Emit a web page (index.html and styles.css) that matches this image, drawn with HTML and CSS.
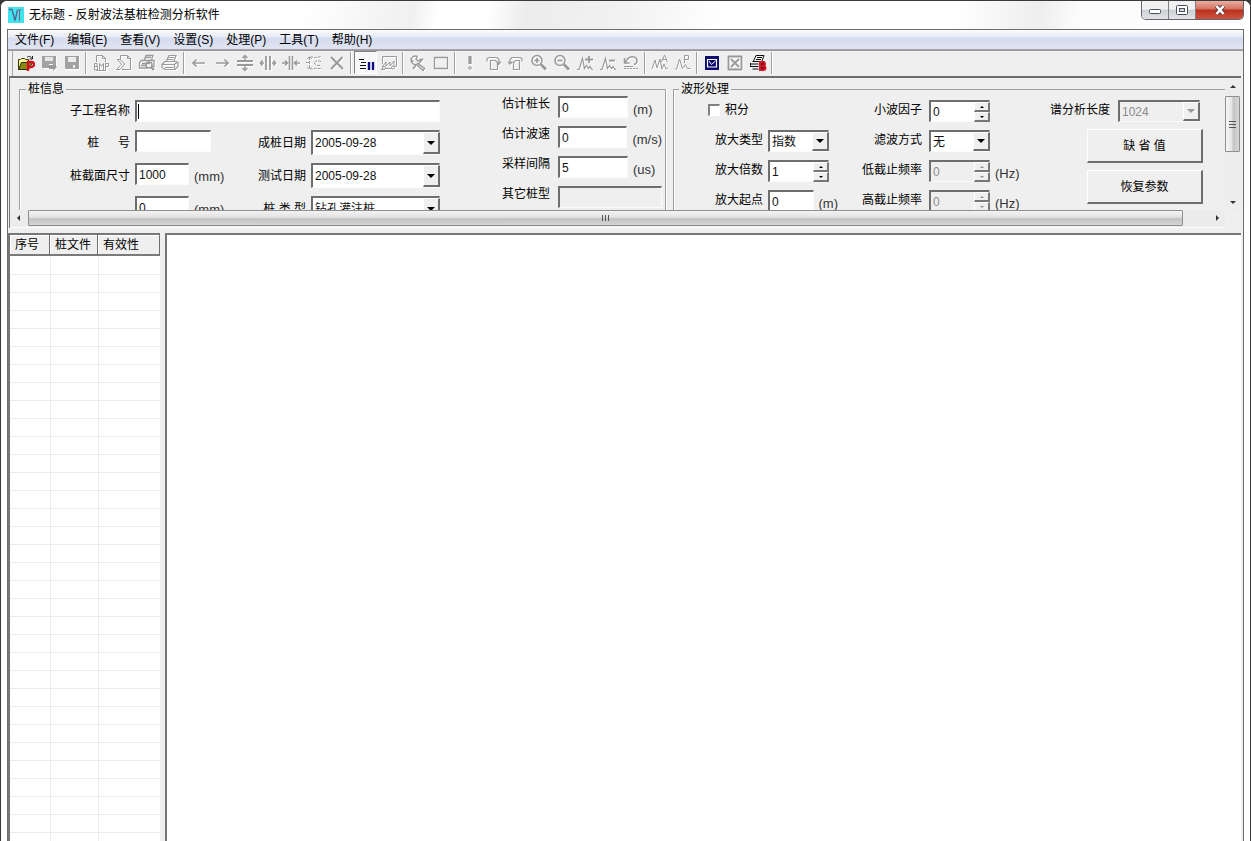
FILE: index.html
```html
<!DOCTYPE html>
<html lang="zh-CN">
<head>
<meta charset="utf-8">
<title>无标题 - 反射波法基桩检测分析软件</title>
<link rel="stylesheet" href="styles.css">
</head>
<body>
<div class="window">
  <header class="titlebar">
    <svg class="app-icon" viewBox="0 0 16 16"><rect width="16" height="16" fill="#3fe4ee"/><path d="M1 2.500h3l3 11 2.500-10.500" fill="none" stroke="#56618f" stroke-width="1.300"/><path d="M11.500 14V3.500M9.500 3h4" fill="none" stroke="#8a5a7a"/></svg>
    <h1 class="title">无标题 - 反射波法基桩检测分析软件</h1>
    <div class="caption">
      <button class="cap cap-min" aria-label="最小化"><svg width="14" height="10" viewBox="0 0 14 10"><rect x="1.5" y="4.5" width="11" height="4" rx="1" fill="#fff" stroke="#4a4e58"/></svg></button>
      <button class="cap cap-max" aria-label="最大化"><svg width="12" height="10" viewBox="0 0 12 10"><rect x=".5" y=".5" width="11" height="9" rx="1" fill="#fff" stroke="#4a4e58"/><rect x="3.5" y="3.5" width="5" height="3" fill="#d8dadd" stroke="#4a4e58"/></svg></button>
      <button class="cap cap-close" aria-label="关闭"><svg width="12" height="10" viewBox="0 0 12 10"><path d="M2.500 1l7 8M9.500 1l-7 8" stroke="#5a3a40" stroke-width="4.400"/><path d="M2.500 1l7 8M9.500 1l-7 8" stroke="#fff" stroke-width="2.600"/></svg></button>
    </div>
  </header>

  <div class="client">
    <nav class="menubar">
      <button>文件(F)</button><button>编辑(E)</button><button>查看(V)</button><button>设置(S)</button><button>处理(P)</button><button>工具(T)</button><button>帮助(H)</button>
    </nav>

    <div class="toolbar" role="toolbar">
      <button class="tool" aria-label="打开"><svg viewBox="0 0 18 18"><path d="M1.500 15.500v-10h2l1-1h3l1 1h3v3" fill="#f5f19a" stroke="#3c3c00"/><path d="M1.500 15.500l3-7h11l-4 7z" fill="#8a8a10" stroke="#2b2b00"/><path d="M10 3.500c2-2 4-1 5 1M15.500 2v3h-3" fill="none" stroke="#222"/><path d="M11 17V8h3.500a2.500 2.500 0 0 1 0 5H11" fill="none" stroke="#d01020" stroke-width="2.400"/></svg></button>
      <button class="tool" disabled aria-label="另存"><svg viewBox="0 0 18 18"><path d="M2 2h14v10h-3v-2H9v4H2z" fill="#a2a2a2"/><path d="M5 3h8v4H5z" fill="#e6e6e6"/><path d="M9 11h4V9l4 4-4 4v-2H9z" fill="#999"/></svg></button>
      <button class="tool" disabled aria-label="保存"><svg viewBox="0 0 18 18"><path d="M2 2h14v13H3l-1-1z" fill="#a2a2a2"/><path d="M5 3h8v5H5zM10 11h2v3h-2z" fill="#ececec"/></svg></button>
      <span class="sep"></span>
      <button class="tool" disabled aria-label="导出位图"><svg viewBox="0 0 18 18"><path d="M4.500 8V1.500h6l3 3V8M10.500 1.500v3h3M2.500 16V9.500h2.500v3H2.500h3V16zM7.500 16V9.500l2 3 2-3V16M13.500 16V9.500h3v3h-3M4 16.500h10"/></svg></button>
      <button class="tool" disabled aria-label="复制"><svg viewBox="0 0 18 18"><path d="M5.500 6V1.500h7l3 3v11h-5M12.500 1.500v3h3M2 5.500h3l5 4.500-5 5.500H1.500l4-4M3 6l4 5M7 15.500h4"/></svg></button>
      <button class="tool" disabled aria-label="打印预览"><svg viewBox="0 0 18 18"><path d="M6.500 6L8 1.500h7L13.500 6M3 6.500h13v6h-3M3 6.500L1.500 9v5h8M8 3.500h5M4 9.500h8M3 11.500h5" stroke-width="1.300"/><circle cx="11" cy="11" r="3" stroke-width="1.500"/><path d="M13 13l3 3" stroke-width="2.400"/></svg></button>
      <button class="tool" disabled aria-label="打印"><svg viewBox="0 0 18 18"><path d="M5.500 7L8 1.500h7L13 7M4 7.500h11l2 1v4l-3 3H4l-3-2v-3zM8 3.500h5M7 5.500h5M1 10.500h12l3-2M4 13.500h8M13.500 10.500v4" stroke-width="1.200"/></svg></button>
      <span class="sep"></span>
      <button class="tool" disabled aria-label="左移"><svg viewBox="0 0 18 18"><path d="M3 9h12M6.500 5.500L3 9l3.500 3.500" stroke-width="1.700"/></svg></button>
      <button class="tool" disabled aria-label="右移"><svg viewBox="0 0 18 18"><path d="M3 9h12M11.500 5.500L15 9l-3.500 3.500" stroke-width="1.700"/></svg></button>
      <button class="tool" disabled aria-label="纵向放大"><svg viewBox="0 0 18 18"><path d="M1 7h16M1 11h16" stroke-width="2"/><path d="M9 1v5M6.500 4L9 1.500 11.500 4M9 12v5M6.500 14L9 16.500l2.500-2.500" stroke-width="1.400"/></svg></button>
      <button class="tool" disabled aria-label="横向放大"><svg viewBox="0 0 18 18"><path d="M7 2v14M11 2v14" stroke-width="1.800"/><path d="M1 9h4M3.500 6.500L1.500 9l2 2.500M13 9h4M14.500 6.500L16.500 9l-2 2.500" stroke-width="1.600"/></svg></button>
      <button class="tool" disabled aria-label="横向缩小"><svg viewBox="0 0 18 18"><path d="M7.500 2v14M10.500 2v14" stroke-width="1.600"/><path d="M0 9h5M3 6.500L5.500 9 3 11.500M13 9h5M15 6.500L12.500 9l2.500 2.500" stroke-width="1.600"/></svg></button>
      <button class="tool" disabled aria-label="曲线缩放"><svg viewBox="0 0 18 18"><path d="M4.500 3v12M2.500 5l2-2.500 2 2.500M2.500 13l2 2.500 2-2.500M1 8.500h3M5 3.500c3-2 4 1 6 0l5-1M5 14.500c3 2 4-1 6 0h5M16 7.500l-4-1-3 2.500 3 2.500h4" stroke-dasharray="3 1"/></svg></button>
      <button class="tool" disabled aria-label="删除"><svg viewBox="0 0 18 18"><path d="M3 3l12 12M14.500 3L3 15" stroke-width="1.900"/></svg></button>
      <span class="sep"></span>
      <button class="tool pressed" aria-label="列表视图"><svg viewBox="0 0 18 18"><path d="M2 5.500h5M4 8.500h5M3 11.500h6M3 14.500h6" stroke="#111"/><path d="M12 8v8M16 8v8" stroke="#101080" stroke-width="2.400"/></svg></button>
      <button class="tool" disabled aria-label="波形视图"><svg viewBox="0 0 18 18"><path d="M2.500 10V2.500h14v10h-2M2 13l4-5v4l4-4v4l4-5v5M1 15.500h3M6 14.500h6"/><circle cx="4" cy="14" r="1.500"/><circle cx="13" cy="13.500" r="1.500"/></svg></button>
      <span class="sep"></span>
      <button class="tool" disabled aria-label="设置"><svg viewBox="0 0 18 18"><path d="M8.500 2.500L7 5l2 2 2.500-1.500c.5 2-.5 3.500-2.500 4l6.500 5-1.500 2-6.500-6C4.500 11 2 9 2 6l2.500 1.500M2 6c0-2.500 3-5 6.500-3.500" stroke-width="1.400"/><path d="M14 4.500l-2.500 3M7 11l-3 4" stroke-width="1.600"/></svg></button>
      <button class="tool" disabled aria-label="窗口"><svg viewBox="0 0 18 18"><path d="M2.500 3.500h13v11h-13z" stroke-width="1.300"/></svg></button>
      <span class="sep"></span>
      <button class="tool" disabled aria-label="执行"><svg viewBox="0 0 18 18"><path d="M9 2v8" stroke-width="3.200"/><circle cx="9" cy="14" r="1.300"/></svg></button>
      <button class="tool" disabled aria-label="向右旋转"><svg viewBox="0 0 18 18"><path d="M6.500 15.500v-9h5l2 2v7zM3 7.500V4.500L5 3.500h8l2 2v4M12.500 7.500L15 10l2-2.500" stroke-width="1.200"/></svg></button>
      <button class="tool" disabled aria-label="向左旋转"><svg viewBox="0 0 18 18"><path d="M6.500 15.500v-7l2-2h4v9zM15 7.500V4.500L13 3.500H5l-2 2v4M1 7.500L3 10l2.500-2.500" stroke-width="1.200"/></svg></button>
      <button class="tool" disabled aria-label="放大"><svg viewBox="0 0 18 18"><circle cx="7" cy="6.500" r="5" stroke-width="1.500"/><path d="M4.500 6.500h5M7 4v5" stroke-width="1.700"/><path d="M11 10.500l5 5" stroke-width="2.600"/></svg></button>
      <button class="tool" disabled aria-label="缩小"><svg viewBox="0 0 18 18"><circle cx="7" cy="6.500" r="5" stroke-width="1.500"/><path d="M4.500 6.500h5" stroke-width="1.700"/><path d="M11 10.500l5 5" stroke-width="2.600"/></svg></button>
      <button class="tool" disabled aria-label="波形增强"><svg viewBox="0 0 18 18"><path d="M1 15.500h2L6.500 4.500l2 10 2-3 2 3 1.500-2 2 3h1" stroke-width="1.200"/><path d="M9 5.500h8M13 2v7" stroke-width="1.800"/></svg></button>
      <button class="tool" disabled aria-label="波形减弱"><svg viewBox="0 0 18 18"><path d="M1 15.500h2L6.500 4.500l2 10 2-3 2 3 1.500-2 2 3h1" stroke-width="1.200"/><path d="M10 6.500h6" stroke-width="1.800"/></svg></button>
      <button class="tool" disabled aria-label="撤销"><svg viewBox="0 0 18 18"><path d="M2.500 4v5h5M3 8.500l3-4c3-3 9-2 9 2 0 2-1 3.500-3 4" stroke-width="1.500"/><path d="M2 14.500h14" stroke-dasharray="2 1"/><path d="M2 12.500h9"/></svg></button>
      <span class="sep"></span>
      <button class="tool" disabled aria-label="幅值谱"><svg viewBox="0 0 18 18"><path d="M1 15l3-9 2 8 3-9 2 10 2-5 2 5 2-1M10.500 8l3-7 3 7M11.500 5.500h4"/></svg></button>
      <button class="tool" disabled aria-label="功率谱"><svg viewBox="0 0 18 18"><path d="M1 15h1.500L5.500 5l3 9.500 3-4 2 4h3M10.500 9V1.500h4v4h-4"/></svg></button>
      <span class="sep"></span>
      <button class="tool" aria-label="选中"><svg viewBox="0 0 18 18"><path d="M2 2h14v14H2z" fill="#0a0a6e"/><path d="M4.500 5.500h9v7.500h-9z" fill="none" stroke="#fff" stroke-width="1.200"/><path d="M6 7l2.500 3.500L12.500 7" fill="none" stroke="#fff"/></svg></button>
      <button class="tool" disabled aria-label="取消选中"><svg viewBox="0 0 18 18"><path d="M2.500 2.500h13v13h-13z" stroke-width="1.800"/><path d="M5 5l8 8M13 5l-8 8" stroke-width="1.800"/></svg></button>
      <button class="tool" aria-label="批量打印"><svg viewBox="0 0 18 18"><path d="M4.500 7L7 1.500h8L13 7M3.500 7.500h12M1.500 10h8M1.500 12.500h8M3.500 15h6M8 3.500h5M7 5.500h5M1.500 9v4" fill="none" stroke="#111"/><path d="M11 16V8h3a2 2 0 0 1 0 4h-3 3.500a2 2 0 0 1 0 4z" fill="#7a1018" stroke="#d01828" stroke-width="1.900"/></svg></button>
      <span class="sep"></span>
    </div>

    <section class="params">
      <div class="viewport">
        <fieldset class="group">
          <legend>桩信息</legend>
          <div class="pile">
            <label for="proj">子工程名称</label>
            <span class="combo wide"><input id="proj" class="field" type="text"><span class="caret"></span></span>

            <label for="no">桩&emsp; &nbsp;号</label>
            <input id="no" class="field w-no" type="text">
            <label for="made">成桩日期</label>
            <span class="combo date"><input id="made" class="field" type="text" value="2005-09-28"><button class="drop" aria-label="选择成桩日期"></button></span>

            <label for="size">桩截面尺寸</label>
            <span class="pair"><input id="size" class="field w-size" type="text" value="1000"><span class="unit">(mm)</span></span>
            <label for="test">测试日期</label>
            <span class="combo date"><input id="test" class="field" type="text" value="2005-09-28"><button class="drop" aria-label="选择测试日期"></button></span>

            <span></span>
            <span class="pair"><input class="field w-size" type="text" value="0" aria-label="桩截面尺寸二"><span class="unit">(mm)</span></span>
            <label for="kind">桩 类 型</label>
            <span class="combo date"><select id="kind" class="field"><option>钻孔灌注桩</option></select><span class="drop"></span></span>
          </div>
          <div class="estimate">
            <label for="len">估计桩长</label>
            <span class="pair"><input id="len" class="field w-est" type="text" value="0"><span class="unit">(m)</span></span>
            <label for="vel">估计波速</label>
            <span class="pair"><input id="vel" class="field w-est" type="text" value="0"><span class="unit">(m/s)</span></span>
            <label for="smp">采样间隔</label>
            <span class="pair"><input id="smp" class="field w-est" type="text" value="5"><span class="unit">(us)</span></span>
            <label for="oth">其它桩型</label>
            <input id="oth" class="field" type="text" disabled>
          </div>
        </fieldset>

        <fieldset class="group group-wave">
          <legend>波形处理</legend>
          <div class="amp">
            <label class="check"><input type="checkbox">积分</label>
            <label for="amptype">放大类型</label>
            <span class="combo w-num"><select id="amptype" class="field"><option>指数</option></select><span class="drop"></span></span>
            <label for="ampx">放大倍数</label>
            <span class="combo w-num"><input id="ampx" class="field" type="number" value="1"><span class="spin"><button aria-label="增加"></button><button aria-label="减少"></button></span></span>
            <label for="ampo">放大起点</label>
            <span class="pair"><input id="ampo" class="field w-org" type="text" value="0"><span class="unit">(m)</span></span>
          </div>
          <div class="filter">
            <label for="wav">小波因子</label>
            <span class="combo w-num"><input id="wav" class="field" type="number" value="0"><span class="spin"><button aria-label="增加"></button><button aria-label="减少"></button></span></span>
            <label for="flt">滤波方式</label>
            <span class="combo w-num"><select id="flt" class="field"><option>无</option></select><span class="drop"></span></span>
            <label for="low">低截止频率</label>
            <span class="pair"><span class="combo w-num"><input id="low" class="field" type="number" value="0" disabled><span class="spin off"><button disabled aria-label="增加"></button><button disabled aria-label="减少"></button></span></span><span class="unit">(Hz)</span></span>
            <label for="high">高截止频率</label>
            <span class="pair"><span class="combo w-num"><input id="high" class="field" type="number" value="0" disabled><span class="spin off"><button disabled aria-label="增加"></button><button disabled aria-label="减少"></button></span></span><span class="unit">(Hz)</span></span>
          </div>
          <div class="spectrum">
            <div class="spec-row">
              <label for="spec">谱分析长度</label>
              <span class="combo"><select id="spec" class="field" disabled><option>1024</option></select><span class="drop off"></span></span>
            </div>
            <button class="push">缺 省 值</button>
            <button class="push">恢复参数</button>
          </div>
        </fieldset>
      </div>
      <div class="vscroll">
        <button class="arrow up" aria-label="向上滚动"></button>
        <div class="track-v"><div class="thumb-v"><i></i><i></i><i></i></div></div>
        <button class="arrow down" aria-label="向下滚动"></button>
      </div>
      <div class="hscroll">
        <button class="arrow left" aria-label="向左滚动"></button>
        <div class="track-h"><div class="thumb-h"><i></i><i></i><i></i></div></div>
        <button class="arrow right" aria-label="向右滚动"></button>
      </div>
    </section>

    <main class="panes">
      <div class="list">
        <table>
          <thead><tr><th class="c1">序号</th><th class="c2">桩文件</th><th class="c3">有效性</th></tr></thead>
        </table>
        <div class="rows"></div>
      </div>
      <div class="canvas"></div>
    </main>
  </div>
</div>
</body>
</html>
```
FILE: styles.css
```css
* { box-sizing: border-box; }

body {
  margin: 0;
  background: #3a3a3a;
  color: #000;
  font: 12px/16px "Liberation Sans", "Noto Sans CJK SC", sans-serif;
}

button, input, select { font: inherit; color: inherit; border-radius: 0; }
button { padding: 0; border: 0; background: none; }

.window {
  display: flex;
  flex-direction: column;
  height: 100vh;
  padding: 0 6px;
  overflow: hidden;
  border: 1px solid #3a3a3a;
  border-bottom: 0;
  border-radius: 7px 7px 0 0;
  background: #fdfdfd;
}

/* title bar */
.titlebar {
  display: flex;
  flex: none;
  align-items: center;
  height: 28px;
  margin: 0 -6px;
  padding-left: 7px;
  background: linear-gradient(100deg, #fff 24%, #f0f0f0 33%, #fff 35%, #fff 39%, #ececec 42%, #f2f2f2 50%, #fff 58%, #fff 76%, #eee 83%, #fbfbfb 86%, #fff);
}
.app-icon { width: 16px; height: 16px; }
.title { flex: 1; margin: 0 0 0 5px; font-size: 12px; font-weight: normal; }
.caption {
  display: flex;
  align-self: flex-start;
  height: 19px;
  margin-right: 6px;
  overflow: hidden;
  border: 1px solid #63666c;
  border-top: 0;
  border-radius: 0 0 5px 5px;
}
.cap {
  display: flex;
  align-items: center;
  justify-content: center;
  width: 27px;
  border-right: 1px solid #7d8088;
  background: linear-gradient(#f1f1f2 45%, #cdd0d4 50%, #e2e3e5);
}
.cap-close {
  width: 47px;
  border: 0;
  background: linear-gradient(#e8a99c 5%, #d2705e 45%, #b8301c 50%, #cf5440);
}

/* menu */
.client {
  display: flex;
  flex: 1;
  flex-direction: column;
  min-height: 0;
  border: 1px solid #6c6c6c;
  border-bottom: 0;
  background: #efefef;
}
.menubar {
  display: flex;
  flex: none;
  height: 20px;
  padding-left: 1px;
  border-bottom: 1px solid #a4a4ac;
  background: linear-gradient(#fbfcfe, #e6eaf5 38%, #d5dbee 42%, #e0e5f4);
}
.menubar button { padding: 0 7px 0 6px; white-space: nowrap; }

/* toolbar */
.toolbar {
  display: flex;
  flex: none;
  align-items: center;
  height: 26px;
  padding: 0 0 2px 6px;
  border-top: 1px solid #9a9a9a;
  background: linear-gradient(90deg, transparent 4px, #a8a8a8 4px, #a8a8a8 5px, transparent 5px);
}
.tool {
  display: flex;
  flex: none;
  align-items: center;
  justify-content: center;
  width: 23px;
  height: 23px;
}
.tool svg { width: 18px; height: 18px; }
.tool:disabled svg { fill: none; stroke: #999; filter: drop-shadow(1px 1px 0 #fff); }
.tool:disabled svg path[fill] { stroke: none; }
.tool.pressed {
  border: 1px solid #808080;
  border-right-color: #fff;
  border-bottom-color: #fff;
  background: #f8f8f8;
}
.sep {
  flex: none;
  width: 2px;
  height: 22px;
  margin: 0 2px;
  border-left: 1px solid #a0a0a0;
  border-right: 1px solid #fff;
}

/* parameter form */
.params {
  display: grid;
  flex: none;
  grid-template: 132px 18px / 1fr 16px;
  margin: 0 2px 0 1px;
  border-top: 2px solid #6d6d6d;
  border-left: 1px solid #777;
}
.viewport { display: flex; gap: 7px; padding: 4px 0 0 9px; overflow: hidden; }
.group {
  display: flex;
  flex: none;
  align-items: flex-start;
  height: 200px;
  min-width: 0;
  margin: 0;
  padding: 0 3px 0 0;
  border: 1px solid #a0a0a0;
  box-shadow: inset 1px 0 0 #fff, 1px 0 0 #fff;
}
.group-wave { flex: 1 0 auto; padding: 0 40px 0 34px; }
legend { margin-left: 6px; padding: 0 2px; line-height: 14px; }
.group-wave legend { margin-left: -29px; }
label { white-space: nowrap; }

.pile {
  display: grid;
  grid-template-columns: 110px 118px 48px 129px;
  grid-template-rows: 22px 25px 25px 25px;
  gap: 8px 5px;
  padding-top: 4px;
}
.pile label { text-align: right; align-self: center; }
.wide { grid-column: 2 / 5; }
.estimate {
  display: grid;
  grid-template-columns: 48px 104px;
  gap: 8px;
  margin-left: 62px;
}
.amp, .filter {
  display: grid;
  grid-template-columns: 55px 70px;
  grid-template-rows: 22px;
  gap: 8px 5px;
  padding-top: 4px;
}
.amp label, .filter label, .spec-row label { padding-top: 2px; text-align: right; }
.filter { grid-template-columns: 60px 90px; column-gap: 7px; margin-left: 24px; }
.spectrum {
  display: flex;
  flex-direction: column;
  gap: 7px;
  width: 154px;
  margin-left: 30px;
  padding-top: 4px;
}
.spec-row { display: grid; grid-template-columns: 61px 82px; gap: 8px; }

.amp .check { display: flex; grid-column: 1 / 3; gap: 5px; align-items: center; height: 18px; }
.check input {
  appearance: none;
  width: 12px;
  height: 12px;
  margin: 0;
  border: 1px solid #fff;
  border-top: 2px solid #808080;
  border-left: 2px solid #808080;
  background: #fff;
}

.field {
  height: 22px;
  min-width: 0;
  padding: 0 2px;
  border: 1px solid #fbfbfb;
  border-top: 2px solid #6e6e6e;
  border-left: 2px solid #6e6e6e;
  outline: 0;
  background: #fff;
  color: #111;
  appearance: none;
}
.field:disabled { background: #efefef; color: #8a8a8a; opacity: 1; }
input[type="number"] { appearance: textfield; }
.pair { display: flex; gap: 5px; align-items: flex-start; }
.unit { padding-top: 6px; font-size: 13px; line-height: 16px; color: #333; }
.w-no { width: 76px; }
.w-size { width: 54px; }
.w-est { width: 70px; }
.w-org { width: 46px; }
.w-num { flex: none; width: 61px; }

.combo { position: relative; display: flex; align-self: start; }
.combo .field { flex: 1; width: 100%; }
.date .field { height: 25px; }
.caret { position: absolute; top: 4px; left: 3px; width: 1px; height: 15px; background: #000; }
.combo .drop {
  position: absolute;
  top: 2px;
  right: 0;
  bottom: 1px;
  display: grid;
  place-items: center;
  width: 17px;
  border: 1px solid #fff;
  border-right: 2px solid #6e6e6e;
  border-bottom: 2px solid #6e6e6e;
  background: #efefef;
  pointer-events: none;
}
.drop::after { content: ""; border: 4px solid transparent; border-top-color: #000; border-bottom: 0; }
.drop.off::after { border-top-color: #999; }
.spin {
  position: absolute;
  top: 2px;
  right: 0;
  bottom: 0;
  display: grid;
  grid-template-rows: 1fr 1fr;
  width: 16px;
}
.spin button {
  display: grid;
  place-items: center;
  border: 1px solid #fff;
  border-right: 2px solid #777;
  border-bottom: 2px solid #777;
  background: #efefef;
}
.spin button::after { content: ""; border: 2px solid transparent; border-bottom-color: #000; border-top: 0; }
.spin button + button::after { border-top: 2px solid #000; border-bottom: 0; }
.spin.off button::after { opacity: .4; }

.push {
  height: 34px;
  margin-left: 38px;
  border: 1px solid #fff;
  border-right: 2px solid #6e6e6e;
  border-bottom: 2px solid #6e6e6e;
  background: #efefef;
}

/* scroll bars */
.vscroll { display: flex; flex-direction: column; background: #ededed; }
.hscroll { display: flex; border-bottom: 1px solid #fff; background: #ececec; }
.arrow { display: grid; flex: none; place-items: center; width: 16px; height: 16px; }
.arrow::after { content: ""; border: 3px solid transparent; }
.up::after { border-bottom-color: #333; border-top: 0; }
.down::after { border-top-color: #333; border-bottom: 0; }
.left::after { border-right-color: #333; border-left: 0; }
.right::after { border-left-color: #333; border-right: 0; }
.track-v { flex: 1; padding-top: 2px; }
.thumb-v {
  display: flex;
  flex-direction: column;
  gap: 2px;
  align-items: center;
  justify-content: center;
  width: 15px;
  height: 56px;
  border: 1px solid #8e8e8e;
  border-radius: 1px;
  background: linear-gradient(90deg, #f6f6f6, #e4e4e4 45%, #c6c6c6 55%, #d6d6d6);
}
.thumb-v i { width: 7px; height: 1px; background: #555; }
.track-h { flex: 1; padding: 0 26px 0 2px; }
.thumb-h {
  display: flex;
  gap: 2px;
  align-items: center;
  justify-content: center;
  height: 16px;
  border: 1px solid #8e8e8e;
  border-radius: 1px;
  background: linear-gradient(#f3f3f3, #e2e2e2 45%, #c4c4c4 55%, #d4d4d4);
}
.thumb-h i { width: 1px; height: 6px; background: #555; }

/* lower panes */
.panes {
  display: flex;
  flex: 1;
  gap: 5px;
  min-height: 0;
  margin: 5px 2px 0 0;
}
.list, .canvas {
  border-top: 2px solid #777;
  border-left: 2px solid #777;
  background: #fff;
}
.list { display: flex; flex: none; flex-direction: column; width: 152px; }
.canvas { flex: 1; }
table { width: 100%; border-collapse: separate; border-spacing: 0; table-layout: fixed; }
th {
  height: 21px;
  padding: 0 5px;
  border-right: 1px solid #6e6e6e;
  border-bottom: 2px solid #7a7a7a;
  box-shadow: inset 1px 1px 0 #fff;
  background: #efefef;
  font-weight: normal;
  text-align: left;
}
.c1 { width: 40px; }
.c2 { width: 48px; }
.rows {
  flex: 1;
  margin-top: 1px;
  background:
    linear-gradient(#ececec, #ececec) 40px 0 / 1px 100% no-repeat,
    linear-gradient(#ececec, #ececec) 88px 0 / 1px 100% no-repeat,
    repeating-linear-gradient(#fff 0, #fff 17px, #ececec 17px, #ececec 18px);
}
```
